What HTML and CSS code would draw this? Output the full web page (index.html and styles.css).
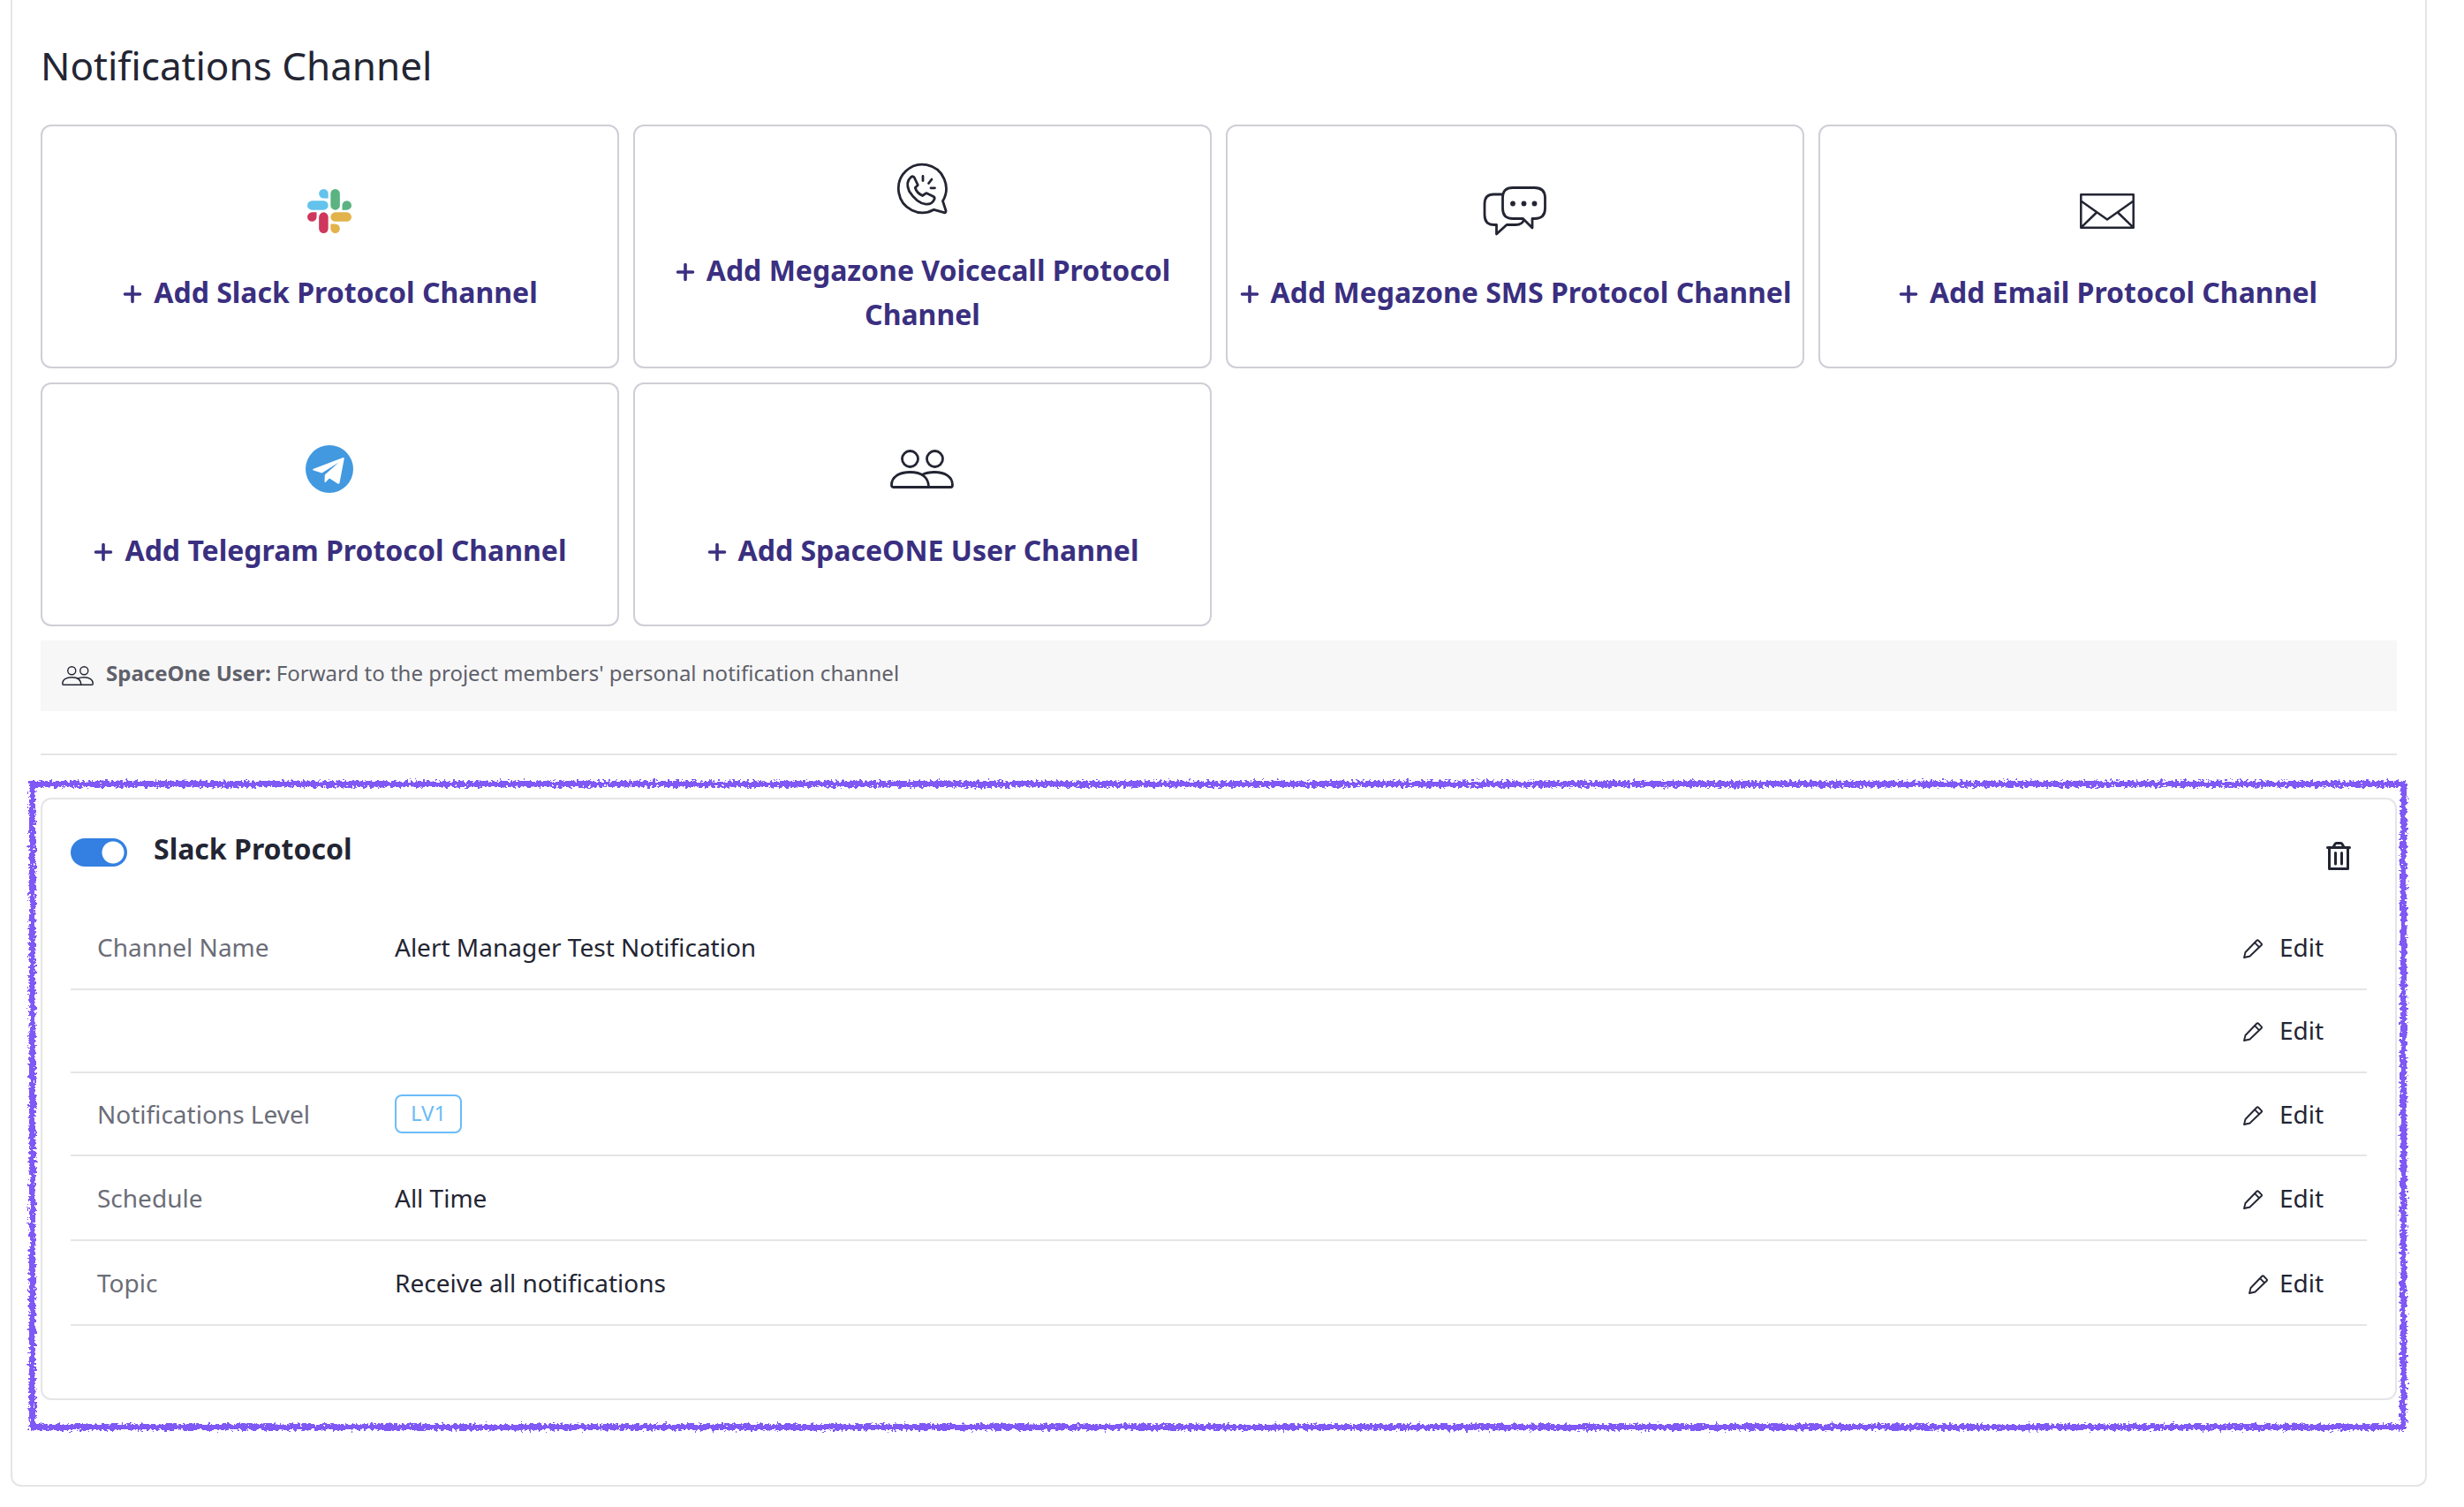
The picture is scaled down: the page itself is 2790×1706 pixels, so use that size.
FILE: index.html
```html
<!DOCTYPE html>
<html lang="en">
<head>
<meta charset="utf-8">
<title>Notifications Channel</title>
<link rel="stylesheet" href="styles.css">
</head>
<body>
<svg class="defs" width="0" height="0" aria-hidden="true">
  <defs>
    <filter id="crayon" filterUnits="objectBoundingBox" x="-0.01" y="-0.02" width="1.02" height="1.04">
      <feTurbulence type="fractalNoise" baseFrequency="0.3" numOctaves="3" seed="4" result="noise"/>
      <feDisplacementMap in="SourceGraphic" in2="noise" scale="9" xChannelSelector="R" yChannelSelector="G"/>
    </filter>
    <symbol id="plus" viewBox="0 0 24 24"><path d="M12 3.500v17M3.500 12h17" fill="none" stroke="currentColor" stroke-width="3.600" stroke-linecap="round"/></symbol>
    <symbol id="users" viewBox="0 0 72 44">
      <g fill="none" stroke="currentColor" stroke-width="2.800" stroke-linejoin="round">
        <circle cx="22.500" cy="10.500" r="9"/><circle cx="50.500" cy="10.500" r="9"/>
        <path d="M1.500 40C1.500 31 10 25.500 22.500 25.500S43.500 31 43.500 42.500H3.500Q1.500 42.500 1.500 40Z"/>
        <path d="M36 28.500C40 26.500 45 25.500 50 25.500 62.500 25.500 70.500 31 70.500 40Q70.500 42.500 68.500 42.500H43"/>
      </g>
    </symbol>
    <symbol id="pencil" viewBox="0 0 24 24">
      <path d="M2 22L3.500 16 16.500 2.500Q17.300 1.800 18 2.500L21.800 6.300Q22.500 7 21.800 7.800L8.500 20.500ZM14 5.200L19 10.200" fill="none" stroke="currentColor" stroke-width="1.900" stroke-linejoin="round"/>
    </symbol>
  </defs>
</svg>

<main class="panel">
  <h1 class="title">Notifications Channel</h1>

  <div class="protocols">
    <button type="button" class="protocol">
      <span class="protocol-icon"><svg width="50" height="50" viewBox="0 0 24 24">
        <path fill="#cf375c" d="M5.042 15.165a2.528 2.528 0 0 1-2.520 2.523A2.528 2.528 0 0 1 0 15.165a2.527 2.527 0 0 1 2.522-2.520h2.520v2.520zM6.313 15.165a2.527 2.527 0 0 1 2.521-2.520 2.527 2.527 0 0 1 2.521 2.520v6.313A2.528 2.528 0 0 1 8.834 24a2.528 2.528 0 0 1-2.521-2.522v-6.313z"/>
        <path fill="#63c3ec" d="M8.834 5.042a2.528 2.528 0 0 1-2.521-2.520A2.528 2.528 0 0 1 8.834 0a2.528 2.528 0 0 1 2.521 2.522v2.520H8.834zM8.834 6.313a2.528 2.528 0 0 1 2.521 2.521 2.528 2.528 0 0 1-2.521 2.521H2.522A2.528 2.528 0 0 1 0 8.834a2.528 2.528 0 0 1 2.522-2.521h6.312z"/>
        <path fill="#5bb381" d="M18.956 8.834a2.528 2.528 0 0 1 2.522-2.521A2.528 2.528 0 0 1 24 8.834a2.528 2.528 0 0 1-2.522 2.521h-2.522V8.834zM17.688 8.834a2.528 2.528 0 0 1-2.523 2.521 2.527 2.527 0 0 1-2.520-2.521V2.522A2.527 2.527 0 0 1 15.165 0a2.528 2.528 0 0 1 2.523 2.522v6.312z"/>
        <path fill="#e2b34b" d="M15.165 18.956a2.528 2.528 0 0 1 2.523 2.522A2.528 2.528 0 0 1 15.165 24a2.527 2.527 0 0 1-2.520-2.522v-2.522h2.520zM15.165 17.688a2.527 2.527 0 0 1-2.520-2.523 2.526 2.526 0 0 1 2.520-2.520h6.313A2.527 2.527 0 0 1 24 15.165a2.528 2.528 0 0 1-2.522 2.523h-6.313z"/>
      </svg></span>
      <span class="protocol-name"><svg class="plus"><use href="#plus"/></svg>Add Slack Protocol Channel</span>
    </button>

    <button type="button" class="protocol">
      <span class="protocol-icon"><svg width="60" height="60" viewBox="0 0 60 60" fill="none" stroke="currentColor" stroke-width="2.800" stroke-linejoin="round" stroke-linecap="round">
        <path d="M43.500 53.300A27 27.300 0 1 1 53.500 43.500L57 54.500Q57.300 57 55 56.700Z"/>
        <path d="M17.500 16.500Q20 14.800 21.300 17L25.300 25.500 22.300 28.500Q24 34.500 30.500 37.500L34.800 34.600 43 38.500Q44.800 39.800 44 41.500 41.500 47.500 34.500 47.200 24 46 15.500 32.500 11 22 17.500 16.500Z"/>
        <path d="M31 15.500v5M41 19l-3.500 4.500M40 28.800h4.500"/>
      </svg></span>
      <span class="protocol-name"><svg class="plus"><use href="#plus"/></svg>Add Megazone Voicecall Protocol Channel</span>
    </button>

    <button type="button" class="protocol">
      <span class="protocol-icon"><svg width="72" height="56" viewBox="0 0 72 56">
        <g fill="none" stroke="currentColor" stroke-width="2.800" stroke-linejoin="round">
          <path d="M22.500 9H12.500Q2 9 2 20V32Q2 43.500 12.500 43.500H15.500V54L27 43.500H37Q44.500 43.500 46.500 38"/>
          <path d="M34 1.500H58.500Q70.500 1.500 70.500 13V25Q70.500 36.500 58.500 36.500H56V47L45.500 36.500H34Q22.500 36.500 22.500 25V13Q22.500 1.500 34 1.500Z"/>
        </g>
        <g fill="currentColor"><circle cx="34" cy="19.500" r="2.900"/><circle cx="46.500" cy="19.500" r="2.900"/><circle cx="58.500" cy="19.500" r="2.900"/></g>
      </svg></span>
      <span class="protocol-name"><svg class="plus"><use href="#plus"/></svg>Add Megazone SMS Protocol Channel</span>
    </button>

    <button type="button" class="protocol">
      <span class="protocol-icon"><svg width="62" height="40" viewBox="0 0 62 40" fill="none" stroke="currentColor" stroke-width="2.500" stroke-linejoin="round">
        <path d="M1.300 1.300H60.700V38.700H1.300ZM1.300 8.500L31 29.500 60.700 8.500M1.300 38.700L19 21.500M60.700 38.700L43 21.500"/>
      </svg></span>
      <span class="protocol-name"><svg class="plus"><use href="#plus"/></svg>Add Email Protocol Channel</span>
    </button>

    <button type="button" class="protocol">
      <span class="protocol-icon"><svg width="54" height="54" viewBox="0 0 54 54">
        <circle cx="27" cy="27" r="27" fill="#4299e0"/>
        <path fill="#fff" d="M42.500 14Q44 13.600 43.700 15.500L38.500 42.500Q37.800 44.500 36 43.200L27 37.500 22.500 42Q21.500 42.500 21.500 41L21.800 33.500 37.500 19.500 18.500 31.500 9 28.600Q7 27.700 9 26.800Z"/>
      </svg></span>
      <span class="protocol-name"><svg class="plus"><use href="#plus"/></svg>Add Telegram Protocol Channel</span>
    </button>

    <button type="button" class="protocol">
      <span class="protocol-icon"><svg width="72" height="44"><use href="#users"/></svg></span>
      <span class="protocol-name"><svg class="plus"><use href="#plus"/></svg>Add SpaceONE User Channel</span>
    </button>
  </div>

  <p class="note">
    <svg class="note-icon"><use href="#users"/></svg>
    <span><strong>SpaceOne User:</strong> Forward to the project members' personal notification channel</span>
  </p>

  <hr class="divider">

  <div class="highlight">
    <section class="channel">
      <header class="channel-head">
        <input class="toggle" type="checkbox" role="switch" id="slack-on" checked>
        <label class="channel-title" for="slack-on">Slack Protocol</label>
        <button type="button" class="trash" aria-label="Delete">
          <svg width="28" height="32" viewBox="0 0 28 32" fill="none" stroke="currentColor" stroke-width="3" stroke-linejoin="round" stroke-linecap="round">
            <path d="M1.500 6.500H26.500M8 6L10 2.500Q10.500 1.500 11.500 1.500H16.500Q17.500 1.500 18 2.500L20 6M3.500 6.500V30.500H24.500V6.500M10.500 12.500V25M17.500 12.500V25"/>
          </svg>
        </button>
      </header>

      <div class="row">
        <span class="label">Channel Name</span>
        <span class="value">Alert Manager Test Notification</span>
        <button type="button" class="edit"><svg><use href="#pencil"/></svg>Edit</button>
      </div>
      <div class="row">
        <span class="label"></span>
        <span class="value"></span>
        <button type="button" class="edit"><svg><use href="#pencil"/></svg>Edit</button>
      </div>
      <div class="row row-badge">
        <span class="label">Notifications Level</span>
        <span class="value"><span class="badge">LV1</span></span>
        <button type="button" class="edit"><svg><use href="#pencil"/></svg>Edit</button>
      </div>
      <div class="row row-roomy">
        <span class="label">Schedule</span>
        <span class="value">All Time</span>
        <button type="button" class="edit"><svg><use href="#pencil"/></svg>Edit</button>
      </div>
      <div class="row row-roomy">
        <span class="label">Topic</span>
        <span class="value">Receive all notifications</span>
        <button type="button" class="edit edit-tight"><svg><use href="#pencil"/></svg>Edit</button>
      </div>
    </section>
  </div>
</main>
</body>
</html>
```
FILE: styles.css
```css
* {
  box-sizing: border-box;
}

body {
  margin: 0 42px 0 12px;
  background: #fff;
  color: #232533;
  font-family: "Noto Sans", sans-serif;
  font-size: 28px;
  line-height: 38px;
}

button {
  padding: 0;
  border: 0;
  background: none;
  color: inherit;
  font: inherit;
  cursor: pointer;
}

.defs {
  position: absolute;
}

.panel {
  padding: 44px 32px 96px;
  border: 2px solid #e5e5e8;
  border-top: 0;
  border-radius: 0 0 12px 12px;
}

.title {
  margin: 0 0 37px;
  font-size: 44px;
  font-weight: 400;
  line-height: 60px;
}

/* Protocol cards */
.protocols {
  display: grid;
  grid-template-columns: repeat(4, 1fr);
  gap: 16px;
}

.protocol {
  display: flex;
  flex-direction: column;
  align-items: center;
  justify-content: center;
  gap: 32px;
  min-height: 276px;
  border: 2px solid #cecfd6;
  border-radius: 12px;
}

.protocol-icon {
  display: flex;
  align-items: center;
  height: 72px;
  padding: 2px 2px 0 0;
}

.protocol-name {
  color: #3a2f80;
  font-size: 32px;
  font-weight: 700;
  line-height: 50px;
}

.plus {
  width: 24px;
  height: 24px;
  margin-right: 12px;
  vertical-align: -2px;
}

.note {
  display: flex;
  align-items: center;
  gap: 14px;
  margin: 16px 0 48px;
  padding: 20px 24px 26px;
  background: #f7f7f7;
  color: #5f616b;
  font-size: 24px;
  line-height: 34px;
}

.note-icon {
  width: 36px;
  height: 22px;
  margin-top: 6px;
  color: #232533;
}

.divider {
  height: 2px;
  margin: 0 0 48px;
  border: 0;
  background: #e5e5e8;
}

/* Registered channel, with the hand-drawn outline around it */
.highlight {
  position: relative;
}

.highlight::after {
  content: "";
  position: absolute;
  inset: -19px -11px -34px -13px;
  border: 7px solid #7f58f5;
  filter: url(#crayon);
  pointer-events: none;
}

.channel {
  padding: 32px 32px 82px;
  border: 2px solid #e5e5e8;
  border-radius: 12px;
}

.channel-head {
  display: flex;
  align-items: center;
  padding: 0 16px 42px 0;
}

.toggle {
  appearance: none;
  width: 64px;
  height: 32px;
  margin: 8px 30px 0 0;
  border-radius: 16px;
  background: radial-gradient(circle at 48px 16px, #fff 12px, #3380e2 13px);
}

.channel-title {
  flex: 1;
  font-size: 32px;
  font-weight: 700;
  line-height: 44px;
}

.trash {
  display: flex;
  justify-content: center;
  width: 32px;
  margin-top: 16px;
}

.row {
  display: flex;
  align-items: center;
  padding: 26px 49px 28px 30px;
  border-bottom: 2px solid #e5e5e8;
}

.row-badge {
  padding-top: 24px;
  padding-bottom: 24px;
}

.row-roomy {
  padding-top: 28px;
}

.label {
  width: 337px;
  color: #6b6d78;
}

.value {
  display: flex;
  flex: 1;
}

.badge {
  padding: 4px 16px 6px;
  border: 2px solid #6bbcf8;
  border-radius: 8px;
  color: #6bbcf8;
  font-size: 24px;
  line-height: 30px;
}

.edit {
  display: flex;
  align-items: center;
  gap: 18px;
}

.edit svg {
  width: 24px;
  height: 24px;
  margin-top: 4px;
}

.edit-tight {
  gap: 12px;
}
```
